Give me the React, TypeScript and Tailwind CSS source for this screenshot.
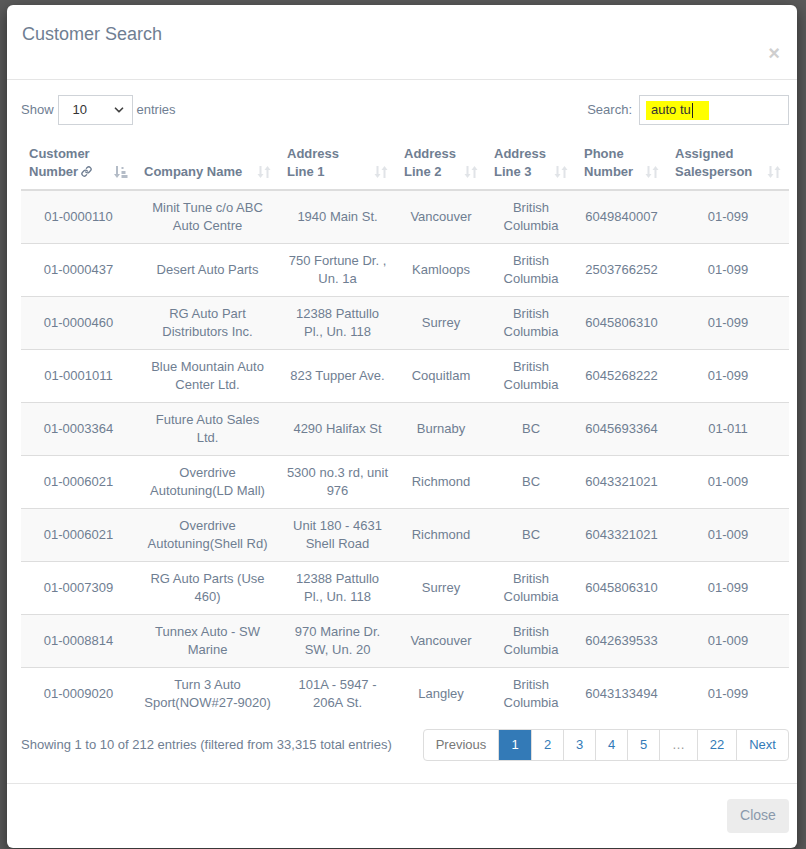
import React from "react";
import { Link as LinkIcon, ChevronDown } from "lucide-react";

const rows = [
  ["01-0000110", "Minit Tune c/o ABC Auto Centre", "1940 Main St.", "Vancouver", "British Columbia", "6049840007", "01-099"],
  ["01-0000437", "Desert Auto Parts", "750 Fortune Dr. , Un. 1a", "Kamloops", "British Columbia", "2503766252", "01-099"],
  ["01-0000460", "RG Auto Part Distributors Inc.", "12388 Pattullo Pl., Un. 118", "Surrey", "British Columbia", "6045806310", "01-099"],
  ["01-0001011", "Blue Mountain Auto Center Ltd.", "823 Tupper Ave.", "Coquitlam", "British Columbia", "6045268222", "01-099"],
  ["01-0003364", "Future Auto Sales Ltd.", "4290 Halifax St", "Burnaby", "BC", "6045693364", "01-011"],
  ["01-0006021", "Overdrive Autotuning(LD Mall)", "5300 no.3 rd, unit 976", "Richmond", "BC", "6043321021", "01-009"],
  ["01-0006021", "Overdrive Autotuning(Shell Rd)", "Unit 180 - 4631 Shell Road", "Richmond", "BC", "6043321021", "01-009"],
  ["01-0007309", "RG Auto Parts (Use 460)", "12388 Pattullo Pl., Un. 118", "Surrey", "British Columbia", "6045806310", "01-099"],
  ["01-0008814", "Tunnex Auto - SW Marine", "970 Marine Dr. SW, Un. 20", "Vancouver", "British Columbia", "6042639533", "01-009"],
  ["01-0009020", "Turn 3 Auto Sport(NOW#27-9020)", "101A - 5947 - 206A St.", "Langley", "British Columbia", "6043133494", "01-099"],
];

const columns = [
  { title: ["Customer", "Number"], width: 115, link: true, active: true },
  { title: ["Company Name"], width: 143 },
  { title: ["Address", "Line 1"], width: 117 },
  { title: ["Address", "Line 2"], width: 90 },
  { title: ["Address", "Line 3"], width: 90 },
  { title: ["Phone", "Number"], width: 91 },
  { title: ["Assigned", "Salesperson"], width: 122 },
];

function SortIcon({ active }: { active?: boolean }) {
  if (active) {
    return (
      <svg width="14" height="13" viewBox="0 0 14 13" className="text-[#b4bcc7]">
        <path d="M2 0h2v8h2l-3 4-3-4h2z" fill="currentColor" />
        <rect x="7.5" y="1" width="2" height="2" fill="currentColor" />
        <rect x="7.5" y="5" width="4" height="3" fill="currentColor" />
        <rect x="7.5" y="9" width="6" height="3" fill="currentColor" />
      </svg>
    );
  }
  return (
    <svg width="14" height="13" viewBox="0 0 14 13" className="text-[#e1e4e8]">
      <path d="M2.5 0h2v8h2l-3 4-3-4h2z" fill="currentColor" />
      <path d="M9.5 12h2v-8h2l-3-4-3 4h2z" fill="currentColor" />
    </svg>
  );
}

const pages = ["Previous", "1", "2", "3", "4", "5", "…", "22", "Next"];

export default function App() {
  return (
    <div
      className="min-h-[849px] w-[806px] bg-[#5a5a5a] pt-[5px] pl-[7px] text-[13px] text-[#6f7e92]"
      style={{ fontFamily: '"Liberation Sans", Arial, sans-serif' }}
    >
      <div className="w-[790px] rounded-md bg-white shadow-[0_5px_15px_rgba(0,0,0,0.5)]">
        <div className="flex h-[75px] items-start justify-between border-b border-[#e5e5e5] px-[15px]">
          <h4 className="pt-[19px] text-[18px] leading-[20px] text-[#6f7e92]">Customer Search</h4>
          <button className="mt-[38px] mr-[2px] text-[20px] font-bold leading-[20px] text-[#cfcfcf]">×</button>
        </div>

        <div className="pl-[14px] pr-[8px] pt-[15px] pb-[22px]">
          <div className="flex items-center justify-between">
            <div className="flex items-center gap-[4px]">
              <span>Show</span>
              <div className="flex h-[30px] w-[75px] items-center justify-between border border-[#cfd3d8] pl-[14px] pr-[6px] text-[#333]">
                <span>10</span>
                <ChevronDown size={14} strokeWidth={3} className="text-[#444]" />
              </div>
              <span>entries</span>
            </div>
            <div className="flex items-center gap-[7px]">
              <span>Search:</span>
              <div className="flex h-[30px] w-[150px] items-center border border-[#cfd3d8] pl-[6px]">
                <span className="flex h-[19px] items-center bg-[#ffff00] pl-[5px] pr-[16px] text-[#333]">
                  auto tu
                  <span className="ml-[1px] h-[15px] w-px bg-[#222]" />
                </span>
              </div>
            </div>
          </div>

          <table className="mt-[12px] w-[768px] table-fixed border-collapse">
            <colgroup>
              {columns.map((c, i) => (
                <col key={i} style={{ width: c.width }} />
              ))}
            </colgroup>
            <thead>
              <tr className="border-b-2 border-[#dddddd]">
                {columns.map((c, i) => (
                  <th key={i} className="relative py-[8px] pl-[8px] pr-[26px] text-left align-bottom font-bold leading-[18px] text-[#6f7e92]">
                    {c.title.map((t, j) => (
                      <div key={j} className="whitespace-nowrap">
                        {t}
                        {c.link && j === c.title.length - 1 && (
                          <LinkIcon size={11} strokeWidth={3} className="ml-[3px] inline -translate-y-[1px]" />
                        )}
                      </div>
                    ))}
                    <span className="absolute right-[8px] bottom-[10px]">
                      <SortIcon active={c.active} />
                    </span>
                  </th>
                ))}
              </tr>
            </thead>
            <tbody>
              {rows.map((r, i) => (
                <tr key={i} className={`h-[53px] border-t border-[#dddddd] ${i % 2 === 0 ? "bg-[#f9f9f9]" : "bg-white"}`}>
                  {r.map((cell, j) => (
                    <td
                      key={j}
                      className={`py-[8px] text-center align-middle leading-[18px] ${j === 2 ? "px-[6px]" : "px-[8px]"}`}
                    >
                      {cell}
                    </td>
                  ))}
                </tr>
              ))}
            </tbody>
          </table>

          <div className="mt-[8px] flex items-center justify-between">
            <span>Showing 1 to 10 of 212 entries (filtered from 33,315 total entries)</span>
            <div className="flex h-[32px] overflow-hidden rounded-[4px] border border-[#dddddd]">
              {pages.map((p, i) => (
                <span
                  key={i}
                  className={`flex items-center justify-center border-l border-[#dddddd] first:border-l-0 ${
                    p === "1"
                      ? "w-[33px] bg-[#337ab7] text-white border-[#337ab7]"
                      : p === "Previous"
                        ? "w-[74px] text-[#777]"
                        : p === "…"
                          ? "w-[38px] text-[#999]"
                          : p === "22"
                            ? "w-[39px] text-[#337ab7]"
                            : p === "Next"
                              ? "w-[52px] text-[#337ab7]"
                              : "w-[32px] text-[#337ab7]"
                  }`}
                >
                  {p}
                </span>
              ))}
            </div>
          </div>
        </div>

        <div className="flex justify-end border-t border-[#e5e5e5] px-[8px] pt-[15px] pb-[15px]">
          <button className="h-[34px] w-[62px] rounded-[4px] bg-[#ececec] text-[14px] text-[#8a99ab]">Close</button>
        </div>
      </div>
    </div>
  );
}
